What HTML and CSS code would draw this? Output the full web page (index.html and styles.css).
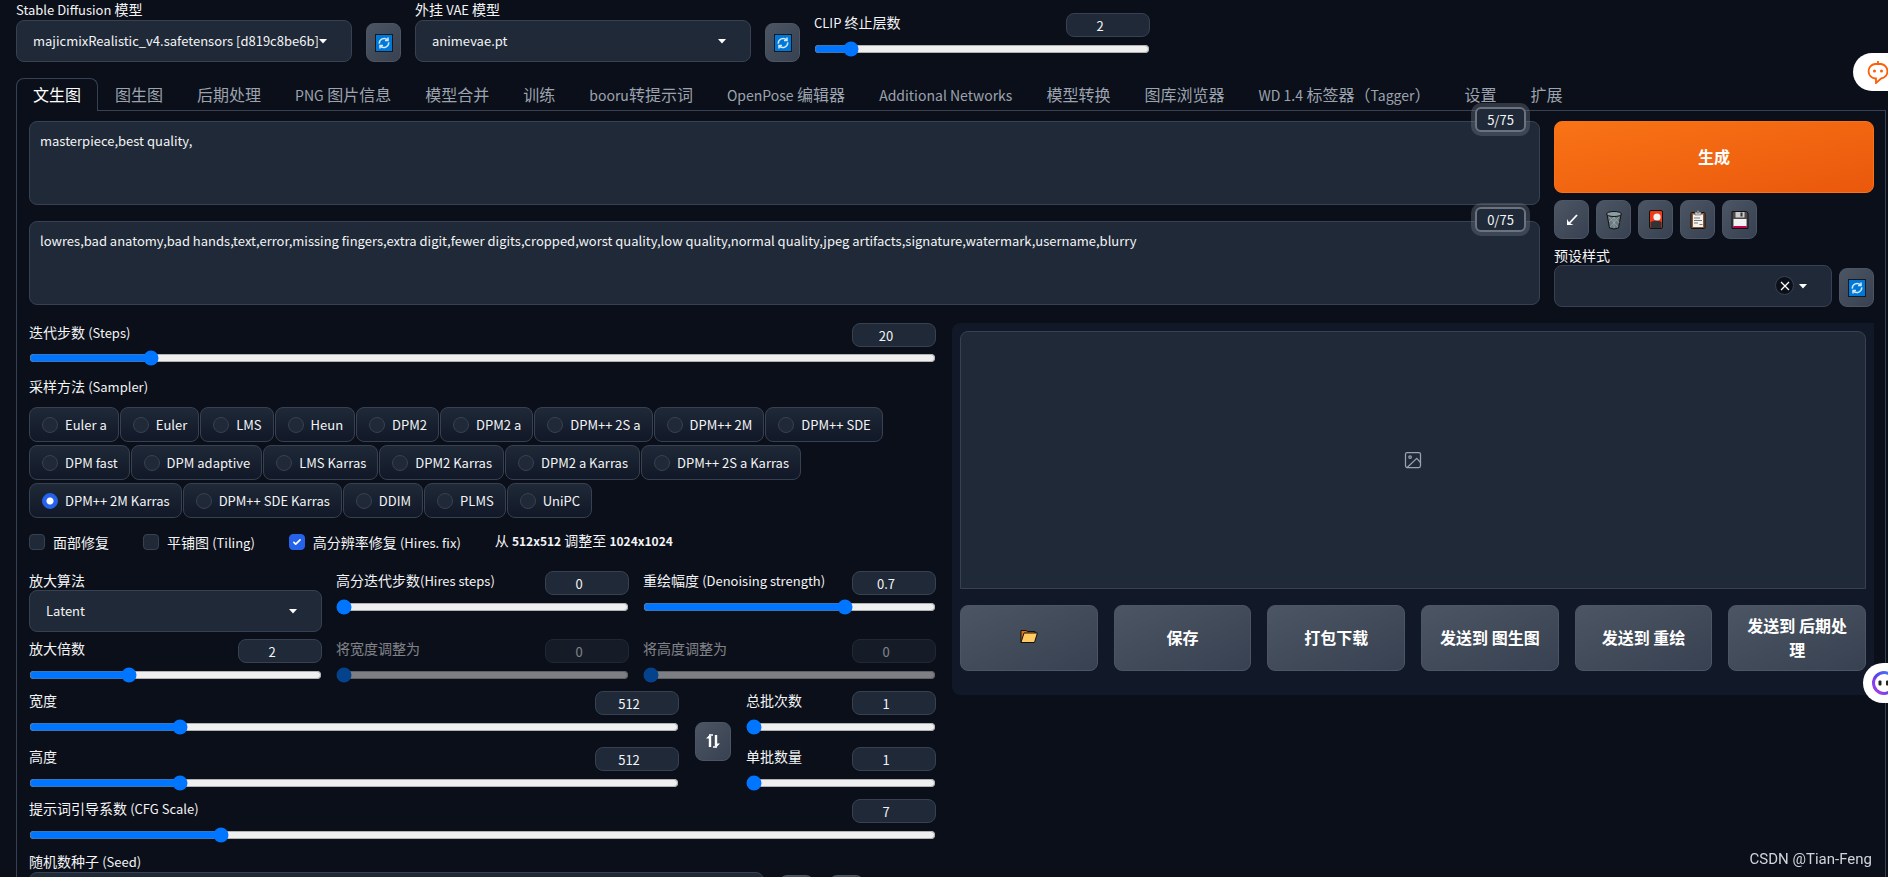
FILE: index.html
```html
<!DOCTYPE html>
<html lang="zh-CN">
<head>
<meta charset="utf-8">
<title>Stable Diffusion</title>
<link rel="stylesheet" href="styles.css">
</head>
<body>
<svg class="defs" aria-hidden="true">
  <symbol id="refresh" viewBox="0 0 18 18">
    <rect width="18" height="18" fill="#101820"/><rect x="1" y="1" width="16" height="16" fill="#0078d7"/>
    <g fill="none" stroke="#d5e9fa" stroke-width="1.5"><path d="M4.3 9.6A4.8 4.8 0 0 1 12.6 6M13.7 8.4A4.8 4.8 0 0 1 5.4 12"/><path d="M13 3.6v3h-3M5 14.4v-3h3"/></g>
  </symbol>
  <symbol id="caret" viewBox="0 0 8 5"><path d="M0 0h8L4 4.5z" fill="#fff"/></symbol>
</svg>

<header class="quick">
  <div class="field quick-select">
    <label for="ckpt"><span class="en">Stable Diffusion</span> 模型</label>
    <div class="select-wrap"><select id="ckpt"><option>majicmixRealistic_v4.safetensors [d819c8be6b]</option></select><svg class="caret"><use href="#caret"/></svg></div>
  </div>
  <button class="tool" aria-label="刷新模型"><svg class="refresh"><use href="#refresh"/></svg></button>
  <div class="field quick-select">
    <label for="vae">外挂 <span class="en">VAE</span> 模型</label>
    <div class="select-wrap"><select id="vae"><option>animevae.pt</option></select><svg class="caret"><use href="#caret"/></svg></div>
  </div>
  <button class="tool" aria-label="刷新 VAE"><svg class="refresh"><use href="#refresh"/></svg></button>
  <div class="slider quick-slider">
    <div class="head"><label for="clip"><span class="en">CLIP</span> 终止层数</label><input class="num" type="text" value="2" aria-label="CLIP"></div>
    <input type="range" id="clip" min="1" max="12" value="2">
  </div>
</header>

<nav class="tabs">
  <button class="tab active">文生图</button>
  <button class="tab">图生图</button>
  <button class="tab">后期处理</button>
  <button class="tab"><span class="en">PNG</span> 图片信息</button>
  <button class="tab">模型合并</button>
  <button class="tab">训练</button>
  <button class="tab"><span class="en">booru</span>转提示词</button>
  <button class="tab"><span class="en">OpenPose</span> 编辑器</button>
  <button class="tab"><span class="en">Additional Networks</span></button>
  <button class="tab">模型转换</button>
  <button class="tab">图库浏览器</button>
  <button class="tab"><span class="en">WD 1.4</span> 标签器（<span class="en">Tagger</span>）</button>
  <button class="tab">设置</button>
  <button class="tab">扩展</button>
</nav>

<main class="panel">
  <section class="top">
    <div class="prompts">
      <div class="prompt"><textarea aria-label="提示词">masterpiece,best quality,</textarea><span class="counter">5/75</span></div>
      <div class="prompt"><textarea aria-label="反向提示词">lowres,bad anatomy,bad hands,text,error,missing fingers,extra digit,fewer digits,cropped,worst quality,low quality,normal quality,jpeg artifacts,signature,watermark,username,blurry</textarea><span class="counter">0/75</span></div>
    </div>
    <div class="actions">
      <button class="generate">生成</button>
      <div class="tools">
        <button class="tool" aria-label="读取参数"><svg width="18" height="18" viewBox="0 0 18 18"><path d="M14 4 6.500 12" fill="none" stroke="#fff" stroke-width="1.800"/><path d="M4 8v6h6.500L7.500 12.500 5.500 10.500z" fill="#fff"/></svg></button>
        <button class="tool" aria-label="清空"><svg width="18" height="20" viewBox="0 0 18 20"><path d="M2 4.5 4.5 18q4.500 2 9 0L16 4.500z" fill="#69797e" stroke="#111" /><path d="M4 7l9 10M7.500 6l7 7M14 7 5 17M10.500 6 4 12M9 6v12" stroke="#a3b0b4" stroke-width=".7" fill="none"/><ellipse cx="9" cy="4" rx="7.500" ry="2.500" fill="#8d9ea3" stroke="#111"/></svg></button>
        <button class="tool" aria-label="附加网络"><svg width="14" height="20" viewBox="0 0 14 20"><rect x=".5" y=".5" width="13" height="18" rx="1.500" fill="#f03a17" stroke="#111"/><path d="M1.500 12q6-3 11 0v6h-11z" fill="#333"/><circle cx="8" cy="7" r="3.600" fill="#f2f2f2"/></svg></button>
        <button class="tool" aria-label="粘贴样式"><svg width="16" height="20" viewBox="0 0 16 20"><rect x="1" y="2.500" width="14" height="16" rx="1" fill="#8e562e" stroke="#111"/><rect x="3" y="4.500" width="10" height="12.500" fill="#f2f2f2"/><path d="M5 2h6v3H5zM7 .5h2V3H7z" fill="#cbcbcb" stroke="#444" stroke-width=".5"/><path d="M4 8h6M4 10.500h8M4 13h4M9.500 14.500h3" stroke="#777"/></svg></button>
        <button class="tool" aria-label="保存样式"><svg width="18" height="20" viewBox="0 0 18 20"><path d="M1 1.500h14.500L17 3v15.500H1z" fill="#4a4a4a" stroke="#111"/><rect x="4.500" y="2" width="9" height="5.500" fill="#cbcbcb"/><rect x="9.500" y="2.500" width="2" height="4" fill="#333"/><rect x="2.500" y="9" width="13" height="7.500" fill="#f2f2f2"/><rect x="2.500" y="16" width="13" height="2" fill="#c30052"/></svg></button>
      </div>
      <div class="style-row">
        <div class="field">
          <label for="styles">预设样式</label>
          <div class="select-wrap"><select id="styles"><option></option></select>
            <button class="clear" aria-label="清除"><svg width="10" height="10" viewBox="0 0 10 10"><path d="m1 1 8 8M9 1 1 9" stroke="#fff" stroke-width="1.300"/></svg></button>
            <svg class="caret"><use href="#caret"/></svg></div>
        </div>
        <button class="tool" aria-label="刷新样式"><svg class="refresh"><use href="#refresh"/></svg></button>
      </div>
    </div>
  </section>

  <section class="body">
    <div class="settings">
      <div class="slider steps">
        <div class="head"><label for="steps">迭代步数 <span class="en">(Steps)</span></label><input class="num" type="text" value="20" aria-label="Steps"></div>
        <input type="range" id="steps" min="1" max="150" value="20">
      </div>

      <fieldset class="sampler">
        <legend>采样方法 <span class="en">(Sampler)</span></legend>
        <div class="radios">
          <div class="radio-row">
            <label class="radio"><input type="radio" name="s">Euler a</label>
            <label class="radio"><input type="radio" name="s">Euler</label>
            <label class="radio"><input type="radio" name="s">LMS</label>
            <label class="radio"><input type="radio" name="s">Heun</label>
            <label class="radio"><input type="radio" name="s">DPM2</label>
            <label class="radio"><input type="radio" name="s">DPM2 a</label>
            <label class="radio"><input type="radio" name="s">DPM++ 2S a</label>
            <label class="radio"><input type="radio" name="s">DPM++ 2M</label>
            <label class="radio"><input type="radio" name="s">DPM++ SDE</label>
          </div>
          <div class="radio-row">
            <label class="radio"><input type="radio" name="s">DPM fast</label>
            <label class="radio"><input type="radio" name="s">DPM adaptive</label>
            <label class="radio"><input type="radio" name="s">LMS Karras</label>
            <label class="radio"><input type="radio" name="s">DPM2 Karras</label>
            <label class="radio"><input type="radio" name="s">DPM2 a Karras</label>
            <label class="radio"><input type="radio" name="s">DPM++ 2S a Karras</label>
          </div>
          <div class="radio-row">
            <label class="radio"><input type="radio" name="s" checked>DPM++ 2M Karras</label>
            <label class="radio"><input type="radio" name="s">DPM++ SDE Karras</label>
            <label class="radio"><input type="radio" name="s">DDIM</label>
            <label class="radio"><input type="radio" name="s">PLMS</label>
            <label class="radio"><input type="radio" name="s">UniPC</label>
          </div>
        </div>
      </fieldset>

      <div class="checks">
        <label class="check"><input type="checkbox"><span>面部修复</span></label>
        <label class="check"><input type="checkbox"><span>平铺图 <span class="en">(Tiling)</span></span></label>
        <label class="check"><input type="checkbox" checked><span>高分辨率修复 <span class="en">(Hires. fix)</span></span></label>
        <p class="resize">从 <b>512x512</b> 调整至 <b>1024x1024</b></p>
      </div>

      <div class="hires">
        <div class="field">
          <label for="up">放大算法</label>
          <div class="select-wrap"><select id="up"><option>Latent</option></select><svg class="caret"><use href="#caret"/></svg></div>
        </div>
        <div class="slider">
          <div class="head"><label for="hs">高分迭代步数<span class="en">(Hires steps)</span></label><input class="num" type="text" value="0" aria-label="Hires steps"></div>
          <input type="range" id="hs" min="0" max="150" value="0">
        </div>
        <div class="slider">
          <div class="head"><label for="dn">重绘幅度 <span class="en">(Denoising strength)</span></label><input class="num" type="text" value="0.7" aria-label="Denoising"></div>
          <input type="range" id="dn" min="0" max="1" step="0.01" value="0.7">
        </div>
        <div class="slider">
          <div class="head"><label for="ub">放大倍数</label><input class="num" type="text" value="2" aria-label="放大倍数数值"></div>
          <input type="range" id="ub" min="1" max="4" step="0.05" value="2">
        </div>
        <div class="slider off">
          <div class="head"><label for="rw">将宽度调整为</label><input class="num" type="text" value="0" aria-label="宽度调整数值"></div>
          <input type="range" id="rw" min="0" max="2048" value="0">
        </div>
        <div class="slider off">
          <div class="head"><label for="rh">将高度调整为</label><input class="num" type="text" value="0" aria-label="高度调整数值"></div>
          <input type="range" id="rh" min="0" max="2048" value="0">
        </div>
      </div>

      <div class="size">
        <div class="stack">
          <div class="slider">
            <div class="head"><label for="w">宽度</label><input class="num" type="text" value="512" aria-label="宽度数值"></div>
            <input type="range" id="w" min="64" max="2048" value="512">
          </div>
          <div class="slider">
            <div class="head"><label for="h">高度</label><input class="num" type="text" value="512" aria-label="高度数值"></div>
            <input type="range" id="h" min="64" max="2048" value="512">
          </div>
        </div>
        <button class="tool swap" aria-label="交换宽高"><svg width="14" height="14" viewBox="0 0 14 14"><path d="M4 13V2M10 1V12" stroke="#fff" stroke-width="2.400"/><path d="M0 4.500 4.500 0v4.500zM14 9.500 9.500 14V9.500z" fill="#fff"/><path d="M3 1h4M7 13h4" stroke="#fff" stroke-width="1.500"/></svg></button>
        <div class="stack batch">
          <div class="slider">
            <div class="head"><label for="bc">总批次数</label><input class="num" type="text" value="1" aria-label="总批次数值"></div>
            <input type="range" id="bc" min="1" max="100" value="1">
          </div>
          <div class="slider">
            <div class="head"><label for="bs">单批数量</label><input class="num" type="text" value="1" aria-label="单批数量值"></div>
            <input type="range" id="bs" min="1" max="8" value="1">
          </div>
        </div>
      </div>

      <div class="slider">
        <div class="head"><label for="cfg">提示词引导系数 <span class="en">(CFG Scale)</span></label><input class="num" type="text" value="7" aria-label="CFG"></div>
        <input type="range" id="cfg" min="1" max="30" step="0.5" value="7">
      </div>

      <div class="seed">
        <div class="field"><label for="seed">随机数种子 <span class="en">(Seed)</span></label><input type="text" id="seed" class="seed-input"></div>
        <button class="tool" aria-label="随机"></button>
        <button class="tool" aria-label="复用"></button>
      </div>
    </div>

    <div class="results">
      <div class="gallery"><svg width="20" height="20" viewBox="0 0 24 24" fill="none" stroke="#9ca3af" stroke-width="1.500" stroke-linecap="round" stroke-linejoin="round"><rect x="3" y="3" width="18" height="18" rx="2"/><circle cx="8.500" cy="8.500" r="1.500"/><path d="m21 15-4.500-5L5 21"/></svg></div>
      <div class="send">
        <button class="big" aria-label="打开目录"><svg width="18" height="15" viewBox="0 0 18 15"><path d="M1 13.500V1.500h5l1.500 1H15v3" fill="#e8740c" stroke="#111"/><path d="M1 13.500 4 4h13.400L14.500 13.500z" fill="#ffca62" stroke="#111"/></svg></button>
        <button class="big">保存</button>
        <button class="big">打包下载</button>
        <button class="big">发送到 图生图</button>
        <button class="big">发送到 重绘</button>
        <button class="big">发送到 后期处理</button>
      </div>
    </div>
  </section>
</main>

<div class="float float-chat"><svg width="26" height="24" viewBox="0 0 26 24"><path d="M13 1v3M11 18.500H10a7.300 7.300 0 0 1 0-14.500h6a7.300 7.300 0 0 1 0 14.500L11 23z" fill="none" stroke="#fc5f07" stroke-width="1.800"/><circle cx="9.500" cy="11" r="1.500" fill="#fc5f07"/><circle cx="16.500" cy="11" r="1.500" fill="#fc5f07"/></svg></div>
<div class="float float-bot"><svg width="24" height="24" viewBox="0 0 24 24"><defs><linearGradient id="bot" x1="0" y1="1" x2="1" y2="0"><stop offset="0" stop-color="#b03fe0"/><stop offset=".5" stop-color="#5b3ff0"/><stop offset="1" stop-color="#3f8cff"/></linearGradient></defs><circle cx="12" cy="12" r="10.500" fill="none" stroke="url(#bot)" stroke-width="3"/><rect x="6.500" y="9.500" width="3" height="5" rx="1" fill="#222"/><rect x="14" y="9.500" width="3" height="5" rx="1" fill="#222"/></svg></div>
<div class="watermark">CSDN @Tian-Feng</div>
</body>
</html>
```
FILE: styles.css
```css
* { box-sizing: border-box; }
html { height: 100%; }
body {
  margin: 0; height: 100vh; overflow: hidden; display: flex; flex-direction: column;
  background: #0b0f19; color: #f3f4f6;
  font: 14px/20px "Noto Sans CJK SC", sans-serif;
}
button, input, select, textarea { font: inherit; color: inherit; margin: 0; }
label, legend { display: block; white-space: nowrap; line-height: 18px; }
.en { font-size: 13px; }
.defs { position: absolute; width: 0; height: 0; }

.field { display: flex; flex-direction: column; gap: 1px; min-width: 0; }
.select-wrap { position: relative; display: flex; }
select {
  appearance: none; width: 100%; height: 42px; padding: 0 16px; font-size: 13px;
  background: #1f2937; border: 1px solid #374151; border-radius: 8px;
}
.caret { position: absolute; top: 19px; right: 25px; width: 8px; height: 5px; pointer-events: none; }
.tool {
  width: 35px; height: 39px; flex: none; padding: 0; display: flex; align-items: center; justify-content: center;
  border: 1px solid #4b5563; border-radius: 8px; background: linear-gradient(to bottom right, #4b5563, #374151);
}
.refresh { width: 18px; height: 18px; }

.slider { min-width: 0; }
.head { display: flex; justify-content: space-between; align-items: flex-start; height: 24px; }
.num {
  width: 84px; height: 24px; flex: none; padding: 0 16px 0 0; text-align: center; font-size: 13px;
  background: #1f2937; border: 1px solid #374151; border-radius: 8px;
}
input[type="range"] { display: block; width: 100%; height: 16px; margin: 4px 0 0; }
.steps input[type="range"] { margin-top: 3px; }
.off { opacity: .5; }

.quick { display: flex; align-items: flex-end; gap: 14px; padding: 0 16px; height: 62px; }
.quick-select { width: 336px; }
.quick-slider { width: 336px; align-self: flex-start; padding-top: 13px; }

.tabs { display: flex; margin: 16px 2px 0 16px; height: 33px; border-bottom: 1px solid #374151; font-size: 16px; }
.tab {
  height: 33px; padding: 0 16px 2px; white-space: nowrap; background: none; color: #9ca3af;
  border: 1px solid transparent; border-bottom: 0; border-radius: 8px 8px 0 0; line-height: 30px;
}
.tab .en { font-size: 14px; }
.tab.active { color: #fff; background: #0b0f19; border-color: #374151; }

.panel { flex: 1; min-height: 0; margin: 0 2px 0 16px; padding: 10px 11px 0 12px; border: solid #374151; border-width: 0 1px; }
.top { display: flex; gap: 14px; }
.prompts { flex: 1; display: flex; flex-direction: column; gap: 16px; }
.prompt { position: relative; height: 84px; }
textarea {
  display: block; width: 100%; height: 100%; resize: none; padding: 9px 10px; font-size: 13px;
  background: #1f2937; border: 1px solid #374151; border-radius: 8px;
}
.counter {
  position: absolute; top: -14px; right: 14px; width: 51px; height: 25px; line-height: 21px; text-align: center; font-size: 13px;
  border: 2px solid #6b7280; border-radius: 6px; background: #1f2937; box-shadow: 0 0 0 4px rgba(107, 114, 128, .4);
}
.actions { width: 320px; }
.generate {
  display: block; width: 100%; height: 72px; padding: 0 0 2px; font-size: 16px; font-weight: 600; color: #fff;
  border: 1px solid #f97316; border-radius: 8px; background: linear-gradient(to bottom right, #f97316, #ea580c);
}
.tools { display: flex; gap: 7px; margin-top: 7px; }
.style-row { display: flex; align-items: flex-end; gap: 7px; margin-top: 7px; }
.style-row .field { flex: 1; }
.clear {
  position: absolute; right: 38px; top: 11px; width: 19px; height: 19px; padding: 0; border: 1px solid #374151; border-radius: 50%;
  background: #0b0f19; display: flex; align-items: center; justify-content: center;
}

.body { display: grid; grid-template-columns: 907fr 922fr; gap: 16px; margin-top: 16px; align-items: start; }
.settings { min-width: 0; }
.sampler { border: 0; margin: 11px 0 0; padding: 0; }
.sampler legend { padding: 0; margin-bottom: 11px; }
.radios { display: grid; gap: 3px; }
.radio-row { display: flex; gap: 1px; }
.radio {
  display: flex; align-items: center; gap: 7px; height: 35px; padding: 0 11px 0 12px; font-size: 13px;
  border: 1px solid #374151; border-radius: 8px; background: linear-gradient(#1f2937, #111827);
}
input[type="radio"], input[type="checkbox"] {
  appearance: none; width: 16px; height: 16px; flex: none; border: 1px solid #374151; background: #1f2937; border-radius: 50%;
}
input[type="checkbox"] { border-radius: 4px; }
input[type="radio"]:checked { border-color: #2563eb; background: radial-gradient(circle, #fff 3px, #2563eb 4px); }
input[type="checkbox"]:checked {
  border-color: #2563eb;
  background: #2563eb url("data:image/svg+xml,%3Csvg viewBox='0 0 16 16' fill='white' xmlns='http://www.w3.org/2000/svg'%3E%3Cpath d='M12.207 4.793a1 1 0 010 1.414l-5 5a1 1 0 01-1.414 0l-2-2a1 1 0 011.414-1.414L6.500 9.086l4.293-4.293a1 1 0 011.414 0z'/%3E%3C/svg%3E");
}
.checks { display: flex; align-items: center; gap: 34px; height: 20px; margin-top: 14px; }
.check { display: flex; align-items: center; gap: 8px; }
.resize { margin: 0; line-height: 16px; align-self: flex-start; }
.resize b { font-size: 12px; }

.hires { display: grid; grid-template-columns: repeat(3, 1fr); gap: 7px 14px; margin-top: 19px; }
.size { display: flex; margin-top: 8px; align-items: center; }
.stack { flex: 1; display: grid; gap: 12px; }
.batch { flex: 0 0 190px; }
.swap { width: 36px; margin: 0 15px 0 16px; }
.size + .slider { margin-top: 8px; }
.seed { display: flex; align-items: flex-end; gap: 15px; margin-top: 9px; }
.seed .field { width: 735px; }
.seed-input { height: 42px; width: 100%; background: #1f2937; border: 1px solid #374151; border-radius: 8px; }

.results { background: #111827; border-radius: 8px 0 0 8px; padding: 8px 8px 24px; }
.gallery { height: 258px; display: flex; align-items: center; justify-content: center; background: #1f2937; border: 1px solid #374151; border-radius: 8px 8px 0 0; }
.send { display: grid; grid-template-columns: repeat(6, 1fr); gap: 16px; margin-top: 16px; }
.big {
  height: 66px; padding: 0 16px 2px; font-size: 16px; line-height: 24px; font-weight: 600; color: #fff;
  border: 1px solid #4b5563; border-radius: 8px; background: linear-gradient(to bottom right, #4b5563, #374151);
}

.float { position: fixed; right: 0; display: flex; align-items: center; overflow: hidden; background: #fff; }
.float svg { flex: none; }
.float-chat { top: 53px; width: 35px; height: 38px; padding-left: 12px; border-radius: 19px 0 0 19px; }
.float-bot { top: 663px; width: 25px; height: 40px; padding-left: 9px; border-radius: 20px 0 0 20px; }
.watermark { position: fixed; right: 16px; bottom: 8px; font: 15px/20px Roboto, sans-serif; color: #d1d5db; }
```
